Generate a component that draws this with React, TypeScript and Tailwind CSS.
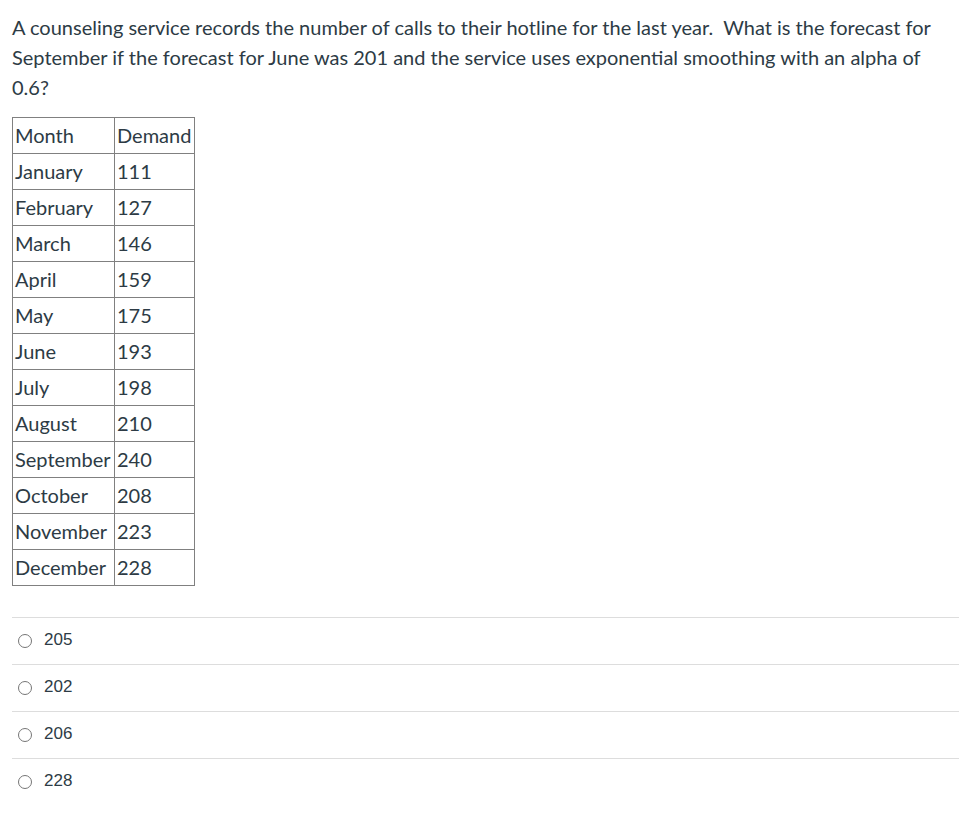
import React from "react"

const rows: [string, string][] = [
    ["January", "111"],
    ["February", "127"],
    ["March", "146"],
    ["April", "159"],
    ["May", "175"],
    ["June", "193"],
    ["July", "198"],
    ["August", "210"],
    ["September", "240"],
    ["October", "208"],
    ["November", "223"],
    ["December", "228"],
]

const answers = ["205", "202", "206", "228"]

export default function App() {
    return (
        <div className="w-[975px] min-h-[826px] bg-white pl-3 pr-4 pt-3 text-[#2d3b45] font-['Lato','Liberation_Sans',sans-serif]">
            <p className="text-[20px] leading-[30px]">
                A counseling service records the number of calls to their hotline for the last year.&nbsp; What is the forecast for September if the forecast for June was 201 and the service uses exponential smoothing with an alpha of 0.6?
            </p>

            <table className="mt-[15px] border-collapse text-[20px] leading-[24px]">
                <tbody>
                    <tr className="h-[36px]">
                        <td className="w-[102px] border border-[#808080] px-[2px] pt-0 pb-[2px]">Month</td>
                        <td className="w-[80px] border border-[#808080] px-[2px] pt-0 pb-[2px]">Demand</td>
                    </tr>
                    {rows.map(([m, d]) => (
                        <tr key={m} className="h-[36px]">
                            <td className="border border-[#808080] px-[2px] pt-0 pb-[2px]">{m}</td>
                            <td className="border border-[#808080] px-[2px] pt-0 pb-[2px]">{d}</td>
                        </tr>
                    ))}
                </tbody>
            </table>

            <div className="mt-[31px] w-[947px]">
                {answers.map((a) => (
                    <div key={a} className="h-[47px] border-t border-[#dddddd] flex items-center gap-[12px] pl-[6px]">
                        <span className="w-[14px] h-[14px] rounded-full border border-[#767676] bg-white"></span>
                        <span className="text-[17px] pb-[2px] font-['Liberation_Sans',Arial,sans-serif]">{a}</span>
                    </div>
                ))}
            </div>
        </div>
    )
}
